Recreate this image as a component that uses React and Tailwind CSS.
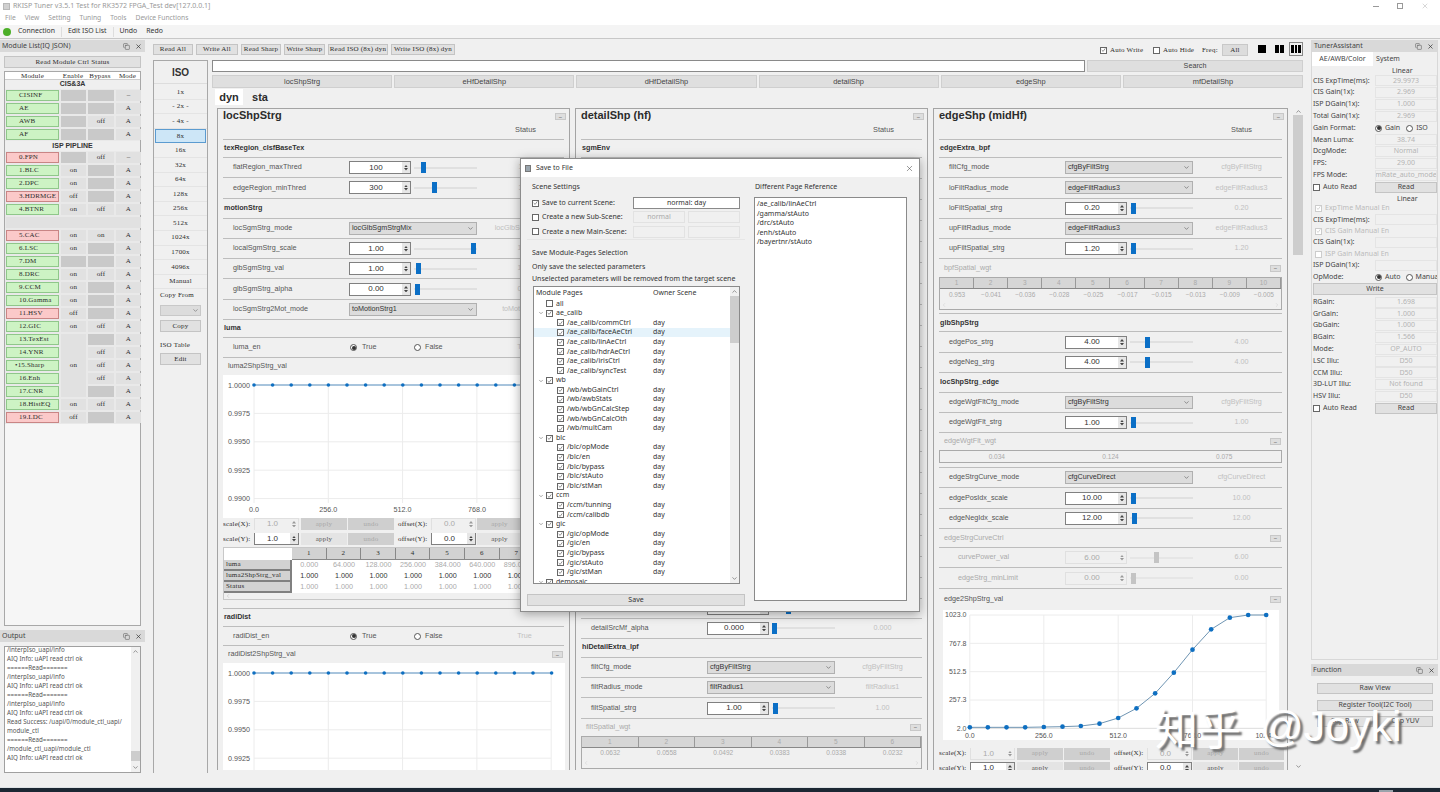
import React from "react";
import { ChevronDown, ChevronUp, ChevronLeft, ChevronRight, X, Copy } from "lucide-react";

const mono = "font-['Liberation_Serif',serif] text-[7px] tracking-[0.2px] font-medium whitespace-nowrap text-[#2c2c2c]";
const noto = "font-['Noto_Sans',sans-serif] text-[7px] text-[#444]";
const btn = "bg-[#e1e1e1] border border-[#c4c4c4] flex items-center justify-center";

function Box({ on, dim, size = "w-[7px] h-[7px]" }) {
  return (
    <span className={`${size} shrink-0 border ${dim ? "border-[#ccc]" : "border-[#666]"} bg-white flex items-center justify-center`}>
      {on && (
        <svg width="6" height="6" viewBox="0 0 7 7">
          <path d="M1 3.5 L3 5.5 L6 1.2" fill="none" stroke={dim ? "#bbb" : "#555"} strokeWidth="0.9" />
        </svg>
      )}
    </span>
  );
}

function Radio({ on }) {
  return (
    <span className="w-[7px] h-[7px] shrink-0 rounded-full border border-[#555] bg-white flex items-center justify-center">
      {on && <span className="w-[4px] h-[4px] rounded-full bg-[#333]" />}
    </span>
  );
}

function DockTitle({ children }) {
  return (
    <div className={`h-[12px] shrink-0 bg-[#d9d9d9] flex items-center justify-between pl-[2px] pr-[3px] ${noto} text-[#333]`}>
      <span>{children}</span>
      <span className="flex items-center gap-[5px]">
        <Copy size={7} strokeWidth={1.6} color="#444" />
        <X size={7} strokeWidth={2.4} color="#333" />
      </span>
    </div>
  );
}

/* ---------- left dock ---------- */
const listA = [
  ["CISINF", "g", null, null, "–"],
  ["AE", "g", null, null, "A"],
  ["AWB", "g", null, "off", "A"],
  ["AF", "g", null, null, "A"],
];
const listB = [
  ["0.FPN", "r", null, "off", "–"],
  ["1.BLC", "g", "on", null, "A"],
  ["2.DPC", "g", "on", null, "A"],
  ["3.HDRMGE", "r", "off", null, "A"],
  ["4.BTNR", "g", "on", "off", "A"],
  ["BLANK"],
  ["5.CAC", "r", "on", "on", "A"],
  ["6.LSC", "g", "on", null, "A"],
  ["7.DM", "g", null, null, "A"],
  ["8.DRC", "g", "on", "off", "A"],
  ["9.CCM", "g", "on", null, "A"],
  ["10.Gamma", "g", "on", null, "A"],
  ["11.HSV", "r", "off", null, "A"],
  ["12.GIC", "g", "on", "off", "A"],
  ["13.TexEst", "g", "SPAN", null, "A"],
  ["14.YNR", "g", "SKIP", "off", "A"],
  ["•15.Sharp", "s", "SKIP", "off", "A"],
  ["16.Enh", "g", "SKIP", "off", "A"],
  ["17.CNR", "g", "SKIP", null, "A"],
  ["18.HistEQ", "g", "on", "off", "A"],
  ["19.LDC", "r", "off", null, "A"],
];

function Toggle({ v }) {
  if (v === null) return <div className="bg-[#c9c9c9]" />;
  return <div className={`bg-[#e1e1e1] flex items-center justify-center ${mono}`}>{v}</div>;
}

function ModuleGrid({ rows }) {
  return (
    <div className="grid grid-cols-[53px_25px_26px_25px] gap-x-[2px] gap-y-[2px] auto-rows-[11px] px-[1px] py-[1px] bg-[#e9e9e9]">
      {rows.map((r) => {
        if (r[0] === "BLANK") return <div key="blank" className="col-span-4 bg-[#e1e1e1]" />;
        const color = r[1] === "r" ? "bg-[#fbc9c9] border-[#c98585]" : "bg-[#cdf3c4] border-[#8fc78a]";
        return (
          <React.Fragment key={r[0]}>
            <div className={`border ${color} flex items-center ${mono} ${r[1] === "s" ? "font-extrabold pl-[8px]" : "pl-[12px]"}`}>{r[0]}</div>
            {r[2] === "SPAN" ? (
              <div className={`row-span-5 bg-[#e1e1e1] flex items-center justify-center ${mono}`}>on</div>
            ) : r[2] === "SKIP" ? null : (
              <Toggle v={r[2]} />
            )}
            <Toggle v={r[3]} />
            <Toggle v={r[4]} />
          </React.Fragment>
        );
      })}
    </div>
  );
}

function ModuleTable() {
  return (
    <div className="mx-[4px] mt-[3px] flex-1 border border-[#a8a8a8] bg-[#f6f6f6] min-h-0">
      <div className={`h-[8px] grid grid-cols-[55px_26px_28px_27px] text-center ${mono} bg-white border-b border-[#ccc] leading-[8px]`}>
        <span>Module</span><span>Enable</span><span>Bypass</span><span>Mode</span>
      </div>
      <div className="h-[9px] flex items-center justify-center text-[7px] font-bold text-[#333] bg-[#efefef]">CIS&amp;3A</div>
      <ModuleGrid rows={listA} />
      <div className="h-[10px] flex items-center justify-center text-[7px] font-bold text-[#333] bg-[#efefef]">ISP PIPLINE</div>
      <ModuleGrid rows={listB} />
    </div>
  );
}

const outputLines = [
  "/interpIso_uapi/info", "AIQ Info: uAPI read ctrl ok", "======Read=======",
  "/interpIso_uapi/info", "AIQ Info: uAPI read ctrl ok", "======Read=======",
  "/interpIso_uapi/info", "AIQ Info: uAPI read ctrl ok",
  "Read Success: /uapi/0/module_ctl_uapi/", "module_ctl", "======Read=======",
  "/module_ctl_uapi/module_ctl", "AIQ Info: uAPI read ctrl ok",
];

function LeftDock() {
  return (
    <div className="w-[145px] shrink-0 flex flex-col pt-[1px]">
      <DockTitle>Module List(IQ JSON)</DockTitle>
      <div className={`mx-[4px] mt-[4px] h-[12px] shrink-0 ${btn} ${mono}`}>Read Module Ctrl Status</div>
      <ModuleTable />
      <div className="mt-[4px]"><DockTitle>Output</DockTitle></div>
      <div className="mx-[4px] mt-[4px] h-[127px] shrink-0 border border-[#a0a0a0] bg-white flex overflow-hidden">
        <div className="flex-1 pl-[2px] -mt-[2px] font-['Noto_Sans',sans-serif] text-[6.2px] text-[#555] leading-[9px]">
          {outputLines.map((l, i) => <div key={i} className="whitespace-nowrap h-[9px]">{l}</div>)}
        </div>
        <div className="w-[9px] bg-[#f0f0f0] flex flex-col items-center justify-between py-[1px]">
          <ChevronUp size={7} color="#555" />
          <div className="flex flex-col items-center w-full">
            <div className="w-full h-[10px] bg-[#cdcdcd] mb-[3px]" />
            <ChevronDown size={7} color="#555" />
          </div>
        </div>
      </div>
    </div>
  );
}

/* ---------- ISO column ---------- */
const isoRows = ["1x", "- 2x -", "- 4x -", "8x", "16x", "32x", "64x", "128x", "256x", "512x", "1024x", "1700x", "4096x", "Manual"];

function IsoColumn() {
  return (
    <div className="w-[55px] shrink-0 border border-[#a8a8a8] bg-[#f0f0f0] flex flex-col mb-[-2px]">
      <div className="h-[23px] flex items-center justify-center text-[10px] font-bold text-[#333] border-b border-[#ddd]">ISO</div>
      <div className="h-[1px]" />
      {isoRows.map((r) => (
        <div
          key={r}
          className={`h-[14.6px] flex items-center justify-center ${mono} ${r === "8x" ? "bg-[#cde6f7] border border-[#5b9bd0] mx-[1px]" : "border-b border-[#e4e4e4]"} ${r.startsWith("-") ? "font-extrabold" : ""}`}
        >
          {r}
        </div>
      ))}
      <div className={`${mono} pl-[6px] mt-[1px]`}>Copy From</div>
      <div className="mx-[6px] mt-[4px] h-[11px] bg-[#dcdcdc] border border-[#c8c8c8] flex items-center justify-end pr-[1px]">
        <ChevronDown size={7} color="#666" />
      </div>
      <div className={`mx-[6px] mt-[4px] h-[12px] ${btn} ${mono}`}>Copy</div>
      <div className={`${mono} pl-[6px] mt-[8px]`}>ISO Table</div>
      <div className={`mx-[6px] mt-[3px] h-[12px] ${btn} ${mono}`}>Edit</div>
    </div>
  );
}

/* ---------- controls ---------- */
function Spin({ v, disabled, w = "w-[62px]" }) {
  return (
    <div className={`${w} h-[13px] shrink-0 border ${disabled ? "border-[#e0e0e0] bg-[#f0f0f0] text-[#aaa]" : "border-[#808080] bg-white text-[#333]"} flex text-[8px]`}>
      <span className="flex-1 flex items-center justify-center">{v}</span>
      <span className={`w-[8px] ${disabled ? "" : "bg-[#e6e6e6]"} flex flex-col items-center justify-center gap-[1px]`}>
        <svg width="4" height="2.5" viewBox="0 0 5 3"><path d="M2.5 0L5 3H0z" fill={disabled ? "#999" : "#444"} /></svg>
        <svg width="4" height="2.5" viewBox="0 0 5 3"><path d="M2.5 3L5 0H0z" fill={disabled ? "#999" : "#444"} /></svg>
      </span>
    </div>
  );
}

function Slider({ at, disabled }) {
  return (
    <div className="relative ml-[3px] w-[63px] h-[13px] flex items-center">
      <div className={`w-full h-[2px] ${disabled ? "bg-[#e6e6e6]" : "bg-[#e0e0e0]"}`} />
      <div
        className={`absolute top-[1px] w-[5px] h-[11px] ${disabled ? "bg-[#c4c4c4]" : "bg-[#0b6fc6]"}`}
        style={{ left: at }}
      />
    </div>
  );
}

function Combo({ v }) {
  return (
    <div className="w-[128px] h-[13px] bg-[#dcdcdc] border border-[#b0b0b0] flex items-center justify-between pl-[2px] pr-[2px] text-[7.2px] text-[#333]">
      <span>{v}</span>
      <ChevronDown size={7} color="#555" />
    </div>
  );
}

const lbl = "text-[7.2px] text-[#555]";

function Row({ label, status, combo, spin, at, dim, radio, h = "h-[20.3px]" }) {
  return (
    <div className={`${h} shrink-0 mx-[5px] border-t border-[#bdbdbd] flex items-center`}>
      <div className={`w-[126px] pl-[10px] whitespace-nowrap ${lbl} ${dim ? "text-[#aaa]" : ""}`}>{label}</div>
      {combo && <Combo v={combo} />}
      {spin !== undefined && (
        <div className="flex items-center">
          <Spin v={spin} disabled={dim} />
          <Slider at={at} disabled={dim} />
        </div>
      )}
      {radio && (
        <div className={`w-[128px] flex items-center ${lbl} text-[#333]`}>
          <span className="w-[65px] flex items-center gap-[4px] pl-[1px]"><Radio on /><span className="ml-[1px]">True</span></span>
          <span className="flex items-center gap-[4px]"><Radio /><span>False</span></span>
        </div>
      )}
      {status && <div className="flex-1 text-center text-[7.2px] text-[#c0c0c0] whitespace-nowrap pl-[8px]">{status}</div>}
    </div>
  );
}

function Section({ children, h = "h-[18px]" }) {
  return (
    <div className={`${h} shrink-0 mx-[5px] border-t border-[#bdbdbd] flex items-center pl-[1px] text-[7.2px] font-bold text-[#333]`}>
      {children}
    </div>
  );
}

function Collapse() {
  return <span className="w-[11px] h-[7px] bg-[#dedede] border border-[#c8c8c8] flex items-center justify-center text-[6px] leading-none text-[#555]">−</span>;
}

function SubHead({ label, dim, h = "h-[19px]" }) {
  return (
    <div className={`${h} shrink-0 mx-[5px] border-t border-[#bdbdbd] flex items-center justify-between pr-[1px] pl-[5px] ${lbl} ${dim ? "text-[#aaa]" : ""}`}>
      <span>{label}</span>
      <Collapse />
    </div>
  );
}

function Group({ title, children, w = "w-[353px]" }) {
  return (
    <div className={`${w} shrink-0 border border-[#a4a4a4] border-b-0 flex flex-col overflow-hidden`}>
      <div className="h-[15px] shrink-0 flex items-start justify-between pr-[3px]">
        <span className="ml-[4px] bg-[#f0f0f0] px-[1px] text-[11px] font-bold text-[#2c2c2c] leading-[12px]">{title}</span>
        <span className="mt-[4px]"><Collapse /></span>
      </div>
      <div className="h-[15px] shrink-0 flex">
        <span className="ml-[297px] text-[7.4px] text-[#555]">Status</span>
      </div>
      {children}
    </div>
  );
}

function ScaleRow({ axis, on }) {
  const ap = on ? "bg-[#e4e4e4] text-[#555]" : "bg-[#cfcfcf] text-[#a8a8a8]";
  const cell = `h-[12px] flex items-center justify-center ${mono}`;
  return (
    <div className="h-[12px] mb-[2.5px] shrink-0 ml-[5px] flex items-center overflow-hidden">
      <span className={`w-[31px] shrink-0 ${mono}`}>scale({axis}):</span>
      <Spin v="1.0" disabled={!on} w="w-[45px]" />
      <span className={`${cell} w-[46px] shrink-0 ml-[2px] ${ap}`}>apply</span>
      <span className={`${cell} w-[46px] shrink-0 ml-[1px] bg-[#cfcfcf] text-[#a8a8a8]`}>undo</span>
      <span className={`w-[33px] shrink-0 ml-[4px] ${mono}`}>offset({axis}):</span>
      <Spin v="0.0" disabled={!on} w="w-[45px]" />
      <span className={`${cell} w-[45px] shrink-0 ml-[1px] ${ap}`}>apply</span>
      <span className={`${cell} w-[45px] shrink-0 ml-[1px] bg-[#cfcfcf] text-[#a8a8a8]`}>undo</span>
    </div>
  );
}

function MiniTable({ head, vals, box = "h-[33px]" }) {
  return (
    <div className={`${box} shrink-0 mx-[5px] border border-[#aaa] flex flex-col overflow-hidden`}>
      {head && (
        <div className="h-[11px] flex bg-[#d6d6d6] border-b border-[#888]">
          {head.map((c) => (
            <span key={c} className="flex-1 text-center text-[6.5px] text-[#aaa] border-r border-[#999] leading-[10px]">{c}</span>
          ))}
        </div>
      )}
      <div className="h-[11px] flex items-center shrink-0">
        {vals.map((v, i) => (
          <span key={i} className="flex-1 text-center text-[6.5px] text-[#aaa]">{v}</span>
        ))}
      </div>
      {head && (
        <div className="flex-1 flex items-center justify-between px-[1px]">
          <ChevronLeft size={6} color="#ccc" />
          <ChevronRight size={6} color="#ccc" />
        </div>
      )}
    </div>
  );
}

function LumaTable() {
  const heads = ["1", "2", "3", "4", "5", "6", "7", "8"];
  const rows = [
    ["luma", ["0.000", "64.000", "128.000", "256.000", "384.000", "640.000", "896.000", "1024.0"], "text-[#aaa]"],
    ["luma2ShpStrg_val", Array(8).fill("1.000"), "text-[#333]"],
    ["Status", Array(8).fill("1.000"), "text-[#aaa]"],
  ];
  return (
    <div className="h-[53px] shrink-0 mx-[5px] border border-[#c8c8c8] flex flex-col overflow-hidden">
      <div className="h-[12px] flex shrink-0">
        <span className="w-[68px] shrink-0 bg-white" />
        {heads.map((c) => <span key={c} className={`w-[34.6px] shrink-0 text-center bg-[#d2d2d2] border-r border-[#888] border-b ${mono} leading-[11px]`}>{c}</span>)}
      </div>
      {rows.map(([name, vals, c]) => (
        <div key={name} className="h-[11px] flex shrink-0 bg-white">
          <span className={`w-[68px] shrink-0 bg-[#d2d2d2] border-b-2 border-r-2 border-[#808080] pl-[2px] ${mono} leading-[9px]`}>{name}</span>
          {vals.map((v, i) => <span key={i} className={`w-[34.6px] shrink-0 text-center text-[7.2px] ${c}`}>{v}</span>)}
        </div>
      ))}
      <div className="flex-1 flex items-center pl-[1px]"><ChevronLeft size={6} color="#bbb" /></div>
    </div>
  );
}

/* ---------- charts ---------- */
function FlatChart({ labels, axis, h = 143 }) {
  const xs = [0, 1, 2, 3, 4].map((i) => 31 + i * 74.3);
  const ys = labels.map((_, i) => 10 + i * 28.4);
  const pts = Array.from({ length: 17 }, (_, i) => 31 + i * 18.6);
  return (
    <svg width="342" height={h} className="shrink-0 ml-[5px] bg-white">
      {xs.map((x) => <line key={x} x1={x} x2={x} y1="10" y2="128" stroke="#ececec" strokeWidth="1" />)}
      {ys.map((y) => <line key={y} x1="31" x2="328" y1={y} y2={y} stroke="#ececec" strokeWidth="1" />)}
      <line x1="31" x2="328" y1="10" y2="10" stroke="#5a93c4" strokeWidth="1" />
      {pts.map((x) => <circle key={x} cx={x} cy="10" r="1.8" fill="#0e6fc1" />)}
      {labels.map((l, i) => (
        <text key={l} x="27" y={ys[i] + 2.5} textAnchor="end" fontSize="7.2" fill="#555" fontFamily="Liberation Sans">{l}</text>
      ))}
      {axis && ["0.0", "256.0", "512.0", "768.0", "1024.0"].map((l, i) => (
        <text key={l} x={xs[i]} y="137" textAnchor="middle" fontSize="7.2" fill="#555" fontFamily="Liberation Sans">{l}</text>
      ))}
    </svg>
  );
}

const curve = [[118,382],[172,382],[228,382],[284,382],[340,381],[396,380],[451,378],[507,371],[563,354],[618,325],[674,280],[730,218],[786,149],[842,88],[898,53],[953,45],[1007,45]];

function CurveChart() {
  return (
    <svg width="336" height="130" viewBox="38 30 1007 390" className="shrink-0 ml-[9px] bg-white">
      {[118, 340, 563, 786, 1007].map((x) => <line key={x} x1={x} x2={x} y1="45" y2="385" stroke="#ececec" strokeWidth="3" />)}
      {[45, 130, 215, 300].map((y) => <line key={y} x1="118" x2="1007" y1={y} y2={y} stroke="#ececec" strokeWidth="3" />)}
      <line x1="118" x2="1007" y1="385" y2="385" stroke="#dcdcdc" strokeWidth="3" />
      <polyline points={curve.map((p) => p.join(",")).join(" ")} fill="none" stroke="#6f95b3" strokeWidth="3" />
      {curve.map((p) => <circle key={p[0]} cx={p[0]} cy={p[1]} r="7" fill="#0e6fc1" />)}
      {[["1023.0", 45], ["767.8", 130], ["512.5", 215], ["257.3", 300], ["2.0", 385]].map(([l, y]) => (
        <text key={l} x="108" y={y + 7} textAnchor="end" fontSize="21" fill="#555" fontFamily="Liberation Sans">{l}</text>
      ))}
      {[["0.0", 118], ["256.0", 340], ["512.0", 563], ["768.0", 786], ["1024.0", 1007]].map(([l, x]) => (
        <text key={l} x={x} y="413" textAnchor="middle" fontSize="21" fill="#555" fontFamily="Liberation Sans">{l}</text>
      ))}
    </svg>
  );
}

/* ---------- panels ---------- */
function Panel1() {
  return (
    <Group title="locShpStrg">
      <Section>texRegion_clsfBaseTex</Section>
      <Row label="flatRegion_maxThred" spin="100" at={7} status="100" />
      <Row label="edgeRegion_minThred" spin="300" at={18} status="300" />
      <Section h="h-[20px]">motionStrg</Section>
      <Row label="locSgmStrg_mode" combo="locGlbSgmStrgMix" status="locGlbSgmStrgMix" />
      <Row label="localSgmStrg_scale" spin="1.00" at={57} status="1.00" />
      <Row label="glbSgmStrg_val" spin="1.00" at={2} status="1.00" />
      <Row label="glbSgmStrg_alpha" spin="0.00" at={1} status="0.00" />
      <Row label="locSgmStrg2Mot_mode" combo="toMotionStrg1" status="toMotionStrg1" />
      <Section>luma</Section>
      <Row label="luma_en" radio status="True" />
      <SubHead label="luma2ShpStrg_val" h="h-[18px]" />
      <FlatChart axis labels={["1.0000", "0.9975", "0.9950", "0.9925", "0.9900"]} />
      <ScaleRow axis="X" />
      <ScaleRow axis="Y" on />
      <LumaTable />
      <div className="h-[8px] shrink-0" />
      <Section>radiDist</Section>
      <Row label="radiDist_en" radio status="True" h="h-[19px]" />
      <SubHead label="radiDist2ShpStrg_val" h="h-[18px]" />
      <FlatChart labels={["1.0000", "0.9975", "0.9950", "0.9925"]} h={108} />
    </Group>
  );
}

function Panel2() {
  return (
    <Group title="detailShp (hf)">
      <Section>sgmEnv</Section>
      {Array.from({ length: 21 }, (_, i) => (
        <div key={i} className="h-[21px] shrink-0 mx-[5px] border-t border-[#bdbdbd]" />
      ))}
      <Row label="detailSrcHf_alpha" spin="0.000" at={14} status="0.000" h="h-[19.5px]" />
      <Row label="detailSrcMf_alpha" spin="0.000" at={0} status="0.000" />
      <Section h="h-[19px]">hiDetailExtra_lpf</Section>
      <Row label="filtCfg_mode" combo="cfgByFiltStrg" status="cfgByFiltStrg" />
      <Row label="filtRadius_mode" combo="filtRadius1" status="filtRadius1" />
      <Row label="filtSpatial_strg" spin="1.00" at={1} status="1.00" />
      <SubHead label="filtSpatial_wgt" dim h="h-[18px]" />
      <MiniTable
        head={["1", "2", "3", "4", "5", "6"]}
        vals={["0.0632", "0.0558", "0.0492", "0.0383", "0.0338", "0.0232"]}
      />
    </Group>
  );
}

function Panel3() {
  return (
    <Group title="edgeShp (midHf)" w="w-[355px]">
      <Section>edgeExtra_bpf</Section>
      <Row label="filtCfg_mode" combo="cfgByFiltStrg" status="cfgByFiltStrg" />
      <Row label="loFiltRadius_mode" combo="edgeFiltRadius3" status="edgeFiltRadius3" />
      <Row label="loFiltSpatial_strg" spin="0.20" at={1} status="0.20" />
      <Row label="upFiltRadius_mode" combo="edgeFiltRadius3" status="edgeFiltRadius3" />
      <Row label="upFiltSpatial_strg" spin="1.20" at={1} status="1.20" />
      <SubHead label="bpfSpatial_wgt" dim />
      <MiniTable
        head={["1", "2", "3", "4", "5", "6", "7", "8", "9", "10"]}
        vals={["0.953", "−0.041", "−0.036", "−0.028", "−0.025", "−0.017", "−0.015", "−0.013", "−0.009", "−0.005"]}
      />
      <div className="h-[3px] shrink-0" />
      <Section>glbShpStrg</Section>
      <Row label="edgePos_strg" spin="4.00" at={15} status="4.00" />
      <Row label="edgeNeg_strg" spin="4.00" at={15} status="4.00" />
      <Section h="h-[19.5px]">locShpStrg_edge</Section>
      <Row label="edgeWgtFltCfg_mode" combo="cfgByFiltStrg" status="cfgByFiltStrg" />
      <Row label="edgeWgtFlt_strg" spin="1.00" at={1} status="1.00" />
      <SubHead label="edgeWgtFlt_wgt" dim h="h-[18px]" />
      <MiniTable vals={["0.034", "0.124", "0.075"]} box="h-[13px]" />
      <div className="h-[4px] shrink-0" />
      <Row label="edgeStrgCurve_mode" combo="cfgCurveDirect" status="cfgCurveDirect" />
      <Row label="edgePosIdx_scale" spin="10.00" at={1} status="10.00" />
      <Row label="edgeNegIdx_scale" spin="12.00" at={2} status="12.00" />
      <SubHead label="edgeStrgCurveCtrl" dim h="h-[19px]" />
      <Row label={<span className="pl-[9px]">curvePower_val</span>} spin="6.00" at={24} status="6.00" dim />
      <Row label={<span className="pl-[9px]">edgeStrg_minLimit</span>} spin="0.00" at={1} status="0.00" dim />
      <SubHead label="edge2ShpStrg_val" h="h-[22px]" />
      <CurveChart />
      <div className="h-[8px] shrink-0" />
      <ScaleRow axis="X" />
      <ScaleRow axis="Y" on />
    </Group>
  );
}

/* ---------- dialog ---------- */
const tree = [
  { l: "all", d: 0 },
  { l: "ae_calib", d: 0, p: 1, c: 1 },
  ...["commCtrl", "faceAeCtrl", "linAeCtrl", "hdrAeCtrl", "irisCtrl", "syncTest"].map((x) => ({ l: "/ae_calib/" + x, d: 1, c: 1 })),
  { l: "wb", d: 0, p: 1, c: 1 },
  ...["wbGainCtrl", "awbStats", "wbGnCalcStep", "wbGnCalcOth", "multCam"].map((x) => ({ l: "/wb/" + x, d: 1, c: 1 })),
  { l: "blc", d: 0, p: 1, c: 1 },
  ...["opMode", "en", "bypass", "stAuto", "stMan"].map((x) => ({ l: "/blc/" + x, d: 1, c: 1 })),
  { l: "ccm", d: 0, p: 1, c: 1 },
  ...["tunning", "calibdb"].map((x) => ({ l: "/ccm/" + x, d: 1, c: 1 })),
  { l: "gic", d: 0, p: 1, c: 1 },
  ...["opMode", "en", "bypass", "stAuto", "stMan"].map((x) => ({ l: "/gic/" + x, d: 1, c: 1 })),
  { l: "demosaic", d: 0, p: 1, c: 1 },
];

function Dialog() {
  const small = "font-['Noto_Sans',sans-serif] text-[7px] text-[#333]";
  const gray = "border border-[#e2e2e2] bg-[#f0f0f0] flex items-center justify-center text-[#aaa]";
  return (
    <div className="absolute left-[520px] top-[158px] w-[400px] h-[454px] bg-[#f0f0f0] border border-[#8c8c8c] shadow-[0_2px_10px_rgba(0,0,0,0.35)] flex flex-col">
      <div className={`h-[18px] shrink-0 bg-white flex items-center justify-between pl-[4px] pr-[5px] ${small}`}>
        <span className="flex items-center gap-[5px]">
          <span className="w-[6px] h-[7px] bg-[#9aa5ad] border border-[#777]" />
          <span>Save to File</span>
        </span>
        <X size={9} strokeWidth={1.4} color="#444" />
      </div>
      <div className="flex flex-1 min-h-0">
        <div className="w-[218px] ml-[6px] shrink-0 flex flex-col">
          <div className={`h-[10px] mt-[5px] pl-[5px] flex items-center ${small}`}>Scene Settings</div>
          <div className="mt-[4px] h-[44px] pl-[5px] flex flex-col border-b border-[#e6e6e6]">
            {[
              ["Save to current Scene:", true],
              ["Create a new Sub-Scene:", false],
              ["Create a new Main-Scene:", false],
            ].map(([t, on], i) => (
              <div key={t} className={`h-[15px] flex items-center ${small}`}>
                <Box on={on} />
                <span className="ml-[3px] w-[91px] whitespace-nowrap">{t}</span>
                {i === 0 ? (
                  <span className="w-[107px] h-[12px] bg-white border border-[#8a8a8a] flex items-center justify-center">normal: day</span>
                ) : (
                  <span className="flex gap-[3px]">
                    <span className={`w-[52px] h-[12px] ${gray}`}>{i === 1 ? "normal" : ""}</span>
                    <span className={`w-[52px] h-[12px] ${gray}`} />
                  </span>
                )}
              </div>
            ))}
          </div>
          <div className={`h-[10px] mt-[8px] pl-[5px] flex items-center ${small}`}>Save Module-Pages Selection</div>
          <div className={`h-[10px] mt-[4px] pl-[5px] flex items-center ${small}`}>Only save the selected parameters</div>
          <div className={`h-[10px] mt-[2px] pl-[5px] flex items-center whitespace-nowrap ${small}`}>Unselected parameters will be removed from the target scene</div>
          <div className="ml-[6px] mt-[2px] w-[207px] h-[298px] shrink-0 bg-white border border-[#8a8a8a] flex overflow-hidden">
            <div className="flex-1 min-w-0 overflow-hidden">
              <div className={`h-[12px] flex items-center pl-[2px] ${small}`}>
                <span className="w-[117px]">Module Pages</span><span>Owner Scene</span>
              </div>
              {tree.map((t, i) => (
                <div key={i} className={`h-[9.6px] flex items-center ${small} ${t.l === "/ae_calib/faceAeCtrl" ? "bg-[#e5f3fb]" : ""}`}>
                  <span className={`${t.d ? "w-[23px]" : "w-[12px]"} shrink-0 flex justify-center pl-[2px]`}>
                    {t.p && <ChevronDown size={6} color="#555" />}
                  </span>
                  <Box on={t.c} />
                  <span className={`${t.d ? "w-[86px]" : "w-[97px]"} ml-[3px] whitespace-nowrap`}>{t.l}</span>
                  {t.d === 1 && <span>day</span>}
                </div>
              ))}
            </div>
            <div className="w-[9px] bg-[#f0f0f0] flex flex-col items-center justify-between py-[1px]">
              <div className="w-full flex flex-col items-center">
                <ChevronUp size={7} color="#555" />
                <div className="w-full h-[47px] bg-[#cdcdcd] mt-[1px]" />
              </div>
              <ChevronDown size={7} color="#555" />
            </div>
          </div>
          <div className={`mt-[10px] h-[12px] shrink-0 ${btn} ${small}`}>Save</div>
        </div>
        <div className="ml-[9px] w-[153px] shrink-0 flex flex-col">
          <div className={`h-[10px] mt-[5px] pl-[1px] flex items-center ${small}`}>Different Page Reference</div>
          <div className={`mt-[5px] h-[404px] bg-white border border-[#8a8a8a] pl-[2px] pt-[1px] ${small}`}>
            {["/ae_calib/linAeCtrl", "/gamma/stAuto", "/drc/stAuto", "/enh/stAuto", "/bayertnr/stAuto"].map((x) => (
              <div key={x} className="h-[9.5px] leading-[9.5px]">{x}</div>
            ))}
          </div>
        </div>
      </div>
    </div>
  );
}

/* ---------- right dock ---------- */
function Val({ v }) {
  return (
    <span className="w-[62px] h-[11px] shrink-0 border border-[#e4e4e4] flex items-center justify-center text-[#b4b4b4] overflow-hidden whitespace-nowrap">{v}</span>
  );
}

function AR({ children }) {
  return <div className={`h-[11.8px] flex items-center justify-between ${noto}`}>{children}</div>;
}

function RightDock() {
  const k = (t, v) => <AR key={t + v}><span className="whitespace-nowrap">{t}</span><Val v={v} /></AR>;
  const auto = (
    <AR>
      <span className="flex items-center gap-[3px]"><Box /><span>Auto Read</span></span>
      <span className={`w-[62px] h-[11px] ${btn} ${noto}`}>Read</span>
    </AR>
  );
  const man = (t, on) => (
    <div key={t} className={`h-[11px] flex items-center gap-[3px] pl-[2px] ${noto} text-[#bbb]`}><Box on={on} dim /><span>{t}</span></div>
  );
  return (
    <div className="w-[130px] shrink-0 flex flex-col pt-[1px]">
      <div className="h-[620px] shrink-0 flex flex-col border border-[#d8d8d8] border-t-0 mr-[2px] ml-[1px]">
        <DockTitle>TunerAssistant</DockTitle>
        <div className={`h-[14px] flex ${noto}`}>
          <span className="w-[61px] bg-white flex items-center justify-center">AE/AWB/Color</span>
          <span className="w-[30px] flex items-center justify-center">System</span>
        </div>
        <div className="pl-[1px]">
          <div className={`h-[9px] pl-[79px] ${noto} leading-[9px]`}>Linear</div>
          {k("CIS ExpTime(ms):", "29.9973")}
          {k("CIS Gain(1x):", "2.969")}
          {k("ISP DGain(1x):", "1.000")}
          {k("Total Gain(1x):", "2.969")}
          <AR>
            <span>Gain Format:</span>
            <span className="w-[62px] flex items-center gap-[3px]"><Radio on /><span>Gain</span><span className="ml-[3px]"><Radio /></span><span>ISO</span></span>
          </AR>
          {k("Mean Luma:", "38.74")}
          {k("DcgMode:", "Normal")}
          {k("FPS:", "29.00")}
          {k("FPS Mode:", "mRate_auto_mode")}
          {auto}
          <div className={`h-[10px] pl-[84px] ${noto} leading-[11px]`}>Linear</div>
          {man("ExpTime Manual En", true)}
          {k("CIS ExpTime(ms):", "")}
          {man("CIS Gain Manual En", true)}
          {k("CIS Gain(1x):", "")}
          {man("ISP Gain Manual En", false)}
          {k("ISP DGain(1x):", "")}
          <AR>
            <span>OpMode:</span>
            <span className="w-[62px] flex items-center gap-[3px] overflow-hidden whitespace-nowrap"><Radio on /><span>Auto</span><span className="ml-[2px]"><Radio /></span><span>Manua</span></span>
          </AR>
          <div className={`h-[12px] ${btn} ${noto}`}>Write</div>
          <div className="h-[1px]" />
          {k("RGain:", "1.698")}
          {k("GrGain:", "1.000")}
          {k("GbGain:", "1.000")}
          {k("BGain:", "1.566")}
          {k("Mode:", "OP_AUTO")}
          {k("LSC Illu:", "D50")}
          {k("CCM Illu:", "D50")}
          {k("3D-LUT Illu:", "Not found")}
          {k("HSV Illu:", "D50")}
          {auto}
        </div>
      </div>
      <div className="mt-[4px] mr-[2px] ml-[1px]"><DockTitle>Function</DockTitle></div>
      <div className={`mx-[7px] mt-[7px] h-[11px] ${btn} ${noto}`}>Raw View</div>
      <div className={`mx-[7px] mt-[6px] h-[11px] ${btn} ${noto}`}>Register Tool(I2C Tool)</div>
      <div className="mx-[7px] mt-[5px] flex gap-[5px]">
        <div className={`flex-1 h-[11px] ${btn} ${noto}`}>Cap Raw</div>
        <div className={`flex-1 h-[11px] ${btn} ${noto}`}>Cap YUV</div>
      </div>
    </div>
  );
}

/* ---------- center ---------- */
function TopBar() {
  const b = (t, w) => <span key={t} className={`${w} h-[11px] ${btn} ${mono}`}>{t}</span>;
  const sq = (n, sel) => (
    <span className={`w-[14px] h-[14px] flex items-center justify-center gap-[1px] ${sel ? "border border-[#888]" : ""}`}>
      {Array.from({ length: n }, (_, i) => <span key={i} className={`${n === 1 ? "w-[8px]" : n === 2 ? "w-[4px]" : "w-[2.5px]"} h-[8px] bg-black`} />)}
    </span>
  );
  return (
    <div className="h-[21px] shrink-0 flex items-start justify-between pt-[5px]">
      <div className="flex gap-[3px]">
        {b("Read All", "w-[40px]")}
        {b("Write All", "w-[42px]")}
        {b("Read Sharp", "w-[40px]")}
        {b("Write Sharp", "w-[41px]")}
        {b("Read ISO (8x) dyn", "w-[60px]")}
        {b("Write ISO (8x) dyn", "w-[64px]")}
      </div>
      <div className={`flex items-center h-[12px] ${mono}`}>
        <Box on />
        <span className="ml-[3px] w-[43px]">Auto Write</span>
        <Box />
        <span className="ml-[3px] w-[39px]">Auto Hide</span>
        <span className="w-[20px]">Freq:</span>
        <span className={`w-[26px] h-[12px] bg-[#dcdcdc] border border-[#c8c8c8] flex items-center justify-center mr-[7px] ${mono}`}>All</span>
        <span className="flex gap-[3px] items-center -mt-[2px]">{sq(1)}{sq(2)}{sq(3, true)}</span>
      </div>
    </div>
  );
}

const tabs = ["locShpStrg", "eHfDetailShp", "dHfDetailShp", "detailShp", "edgeShp", "mfDetailShp"];

function Center() {
  return (
    <div className="w-[1165px] shrink-0 pl-[8px] pr-[7px] flex flex-col min-h-0">
      <TopBar />
      <div className="flex flex-1 min-h-0">
        <IsoColumn />
        <div className="ml-[4px] flex-1 flex flex-col min-h-0 min-w-0">
          <div className="h-[12px] shrink-0 flex gap-[2px]">
            <div className="w-[873px] bg-white border border-[#8a8a8a]" />
            <div className="flex-1 bg-[#dfdfdf] border border-[#cfcfcf] flex items-center justify-center text-[7.2px] text-[#444]">Search</div>
          </div>
          <div className="mt-[3px] h-[12px] shrink-0 grid grid-cols-6 gap-[2px]">
            {tabs.map((t) => (
              <div key={t} className="bg-[#dfdfdf] border border-[#cfcfcf] flex items-center justify-center text-[7.4px] text-[#444]">{t}</div>
            ))}
          </div>
          <div className="mt-[2px] ml-[3px] h-[16px] shrink-0 flex text-[11px] font-bold text-[#2c2c2c]">
            <span className="w-[28px] bg-white flex items-center justify-center">dyn</span>
            <span className="w-[34px] flex items-center justify-center">sta</span>
          </div>
          <div className="mt-[3px] ml-[5px] flex-1 flex gap-[5px] min-h-0 mb-[3px]">
            <Panel1 />
            <Panel2 />
            <Panel3 />
            <div className="w-[10px] shrink-0 flex flex-col items-center bg-[#f0f0f0] justify-between">
              <div className="w-full flex flex-col items-center">
                <ChevronUp size={7} color="#555" />
                <div className="w-full h-[140px] bg-[#cdcdcd]" />
              </div>
              <ChevronDown size={7} color="#555" />
            </div>
          </div>
        </div>
      </div>
    </div>
  );
}

export default function App() {
  return (
    <div className="relative w-[1440px] h-[792px] overflow-hidden bg-[#f0f0f0] font-['Liberation_Sans',Arial,sans-serif] flex flex-col">
      <div className="h-[12px] shrink-0 bg-white flex items-center justify-between pl-[3px] pr-[11px] font-['Noto_Sans',sans-serif] text-[7px] text-[#999]">
        <span className="flex items-center gap-[3px]">
          <span className="w-[7px] h-[7px] bg-[#d0d0d0] border border-[#b8b8b8]" />
          <span>RKISP Tuner v3.5.1 Test for RK3572 FPGA_Test dev[127.0.0.1]</span>
        </span>
        <span className="flex items-center gap-[18px] text-[#888]">
          <span className="w-[6px] h-[1px] bg-[#999]" />
          <span className="w-[6px] h-[6px] border border-[#999]" />
          <X size={8} strokeWidth={1} color="#888" />
        </span>
      </div>
      <div className="h-[13px] shrink-0 bg-white flex items-center gap-[9px] pl-[5px] font-['Noto_Sans',sans-serif] text-[6.7px] text-[#999]">
        {["File", "View", "Setting", "Tuning", "Tools", "Device Functions"].map((m) => <span key={m}>{m}</span>)}
      </div>
      <div className="h-[14px] shrink-0 bg-[#f4f4f4] border-b border-[#c8c8c8] flex items-center pl-[3px] font-['Noto_Sans',sans-serif] text-[6.9px] text-[#333]">
        <span className="w-[8px] h-[8px] rounded-full bg-[#4caf28] mr-[7px]" />
        <span>Connection</span>
        <span className="w-[1px] h-[10px] bg-[#ddd] mx-[6px]" />
        <span>Edit ISO List</span>
        <span className="w-[1px] h-[10px] bg-[#ddd] mx-[6px]" />
        <span>Undo</span>
        <span className="ml-[9px]">Redo</span>
      </div>
      <div className="flex-1 min-h-0 flex">
        <LeftDock />
        <Center />
        <RightDock />
      </div>
      <div className="h-[14px] shrink-0 bg-[#f0f0f0]" />
      <div className="h-[5px] shrink-0 bg-[#1c2733] border-t border-[#dfe3e6] flex justify-end pr-[47px] overflow-hidden">
        <span className="w-[14px] h-[2px] mt-[2px] bg-[#9aa3ab]" />
      </div>
      <Dialog />
      <div className="absolute left-[1155px] top-[698px] flex items-center gap-[19px] text-white whitespace-nowrap text-[43px] leading-[56px] font-['Noto_Sans_CJK_SC','Liberation_Sans',sans-serif] [text-shadow:3px_3px_2px_#6f6f6f] pointer-events-none">
        <span>知乎</span>
        <span className="font-['Liberation_Sans',sans-serif]">@Joyki</span>
      </div>
    </div>
  );
}
